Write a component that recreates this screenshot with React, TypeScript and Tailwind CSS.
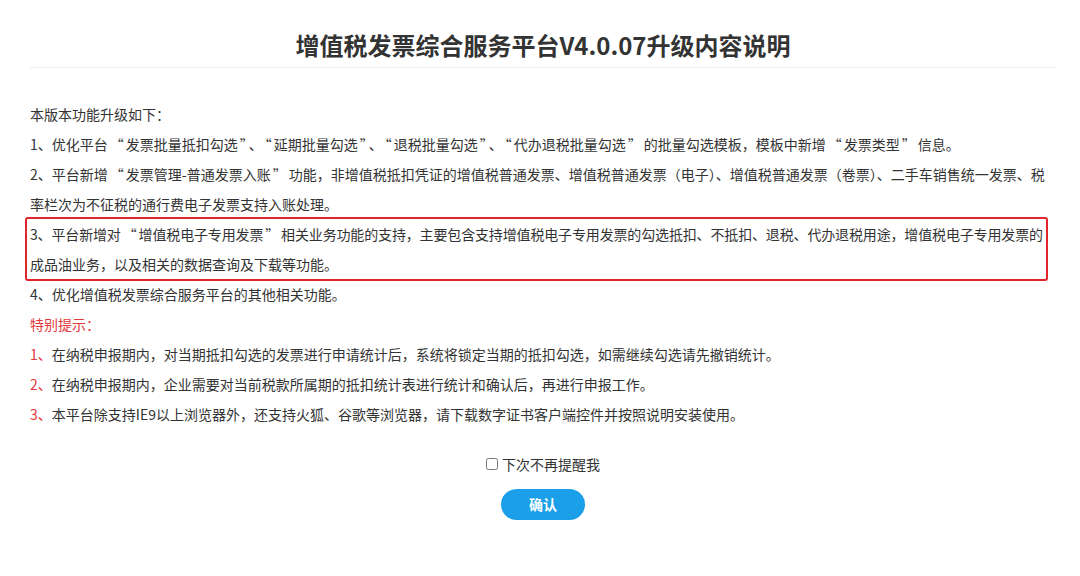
import React from "react";

// 引号两侧留白，接近原页面的全角效果
function Q({ text }: { text: string }) {
  const parts = text.split(/([“”])/);
  return (
    <>
      {parts.map((p, i) =>
        p === "“" || p === "”" ? (
          <span key={i} className="mx-[2px]">
            {p}
          </span>
        ) : (
          <React.Fragment key={i}>{p}</React.Fragment>
        )
      )}
    </>
  );
}

const upgrades = [
  "本版本功能升级如下：",
  "1、优化平台“发票批量抵扣勾选”、“延期批量勾选”、“退税批量勾选”、“代办退税批量勾选”的批量勾选模板，模板中新增“发票类型”信息。",
  "2、平台新增“发票管理-普通发票入账”功能，非增值税抵扣凭证的增值税普通发票、增值税普通发票（电子）、增值税普通发票（卷票）、二手车销售统一发票、税",
  "率栏次为不征税的通行费电子发票支持入账处理。",
];

const tips = [
  "在纳税申报期内，对当期抵扣勾选的发票进行申请统计后，系统将锁定当期的抵扣勾选，如需继续勾选请先撤销统计。",
  "在纳税申报期内，企业需要对当前税款所属期的抵扣统计表进行统计和确认后，再进行申报工作。",
  "本平台除支持IE9以上浏览器外，还支持火狐、谷歌等浏览器，请下载数字证书客户端控件并按照说明安装使用。",
];

function App() {
  const [noRemind, setNoRemind] = React.useState(false);

  return (
    <div className="h-[576px] w-full bg-white text-[#333] font-['Microsoft_YaHei','Noto_Sans_CJK_SC',sans-serif]">
      {/* 标题 */}
      <div className="mx-[30px] w-[1026px] border-b border-[#ebebeb] pt-[30px] pb-[7px]">
        <h1 className="text-center text-[24px] font-bold leading-[30px] text-[#333]">
          增值税发票综合服务平台V4.0.07升级内容说明
        </h1>
      </div>

      <div className="mx-[30px] mt-[31px] text-[14px] leading-[30px]">
        {upgrades.map((line, i) => (
          <p key={i} className="whitespace-nowrap">
            <Q text={line} />
          </p>
        ))}

        {/* 重点内容 */}
        <div className="-mx-[5px] -my-[2px] w-[1023px] rounded-[3px] border-2 border-[#e0262b] px-[3px]">
          <p className="whitespace-nowrap tracking-[-0.15px]">
            <Q text="3、平台新增对“增值税电子专用发票”相关业务功能的支持，主要包含支持增值税电子专用发票的勾选抵扣、不抵扣、退税、代办退税用途，增值税电子专用发票的" />
          </p>
          <p className="whitespace-nowrap">成品油业务，以及相关的数据查询及下载等功能。</p>
        </div>

        <p className="whitespace-nowrap">4、优化增值税发票综合服务平台的其他相关功能。</p>

        <p className="text-[#e4393c]">特别提示：</p>
        {tips.map((tip, i) => (
          <p key={i} className="whitespace-nowrap">
            <span className="text-[#e4393c]">{i + 1}、</span>
            {tip}
          </p>
        ))}
      </div>

      <div className="mt-[25px] flex flex-col items-center pl-[6px]">
        <label className="flex h-[20px] items-center gap-[4px] text-[14px] text-[#333]">
          <input
            type="checkbox"
            checked={noRemind}
            onChange={(e) => setNoRemind(e.target.checked)}
            className="h-[12px] w-[12px] accent-[#1a9fe8]"
          />
          下次不再提醒我
        </label>
        <button className="mt-[15px] h-[31px] w-[84px] rounded-full bg-[#1a9fe8] text-[14px] font-bold text-white">
          确认
        </button>
      </div>
    </div>
  );
}

export default App;
